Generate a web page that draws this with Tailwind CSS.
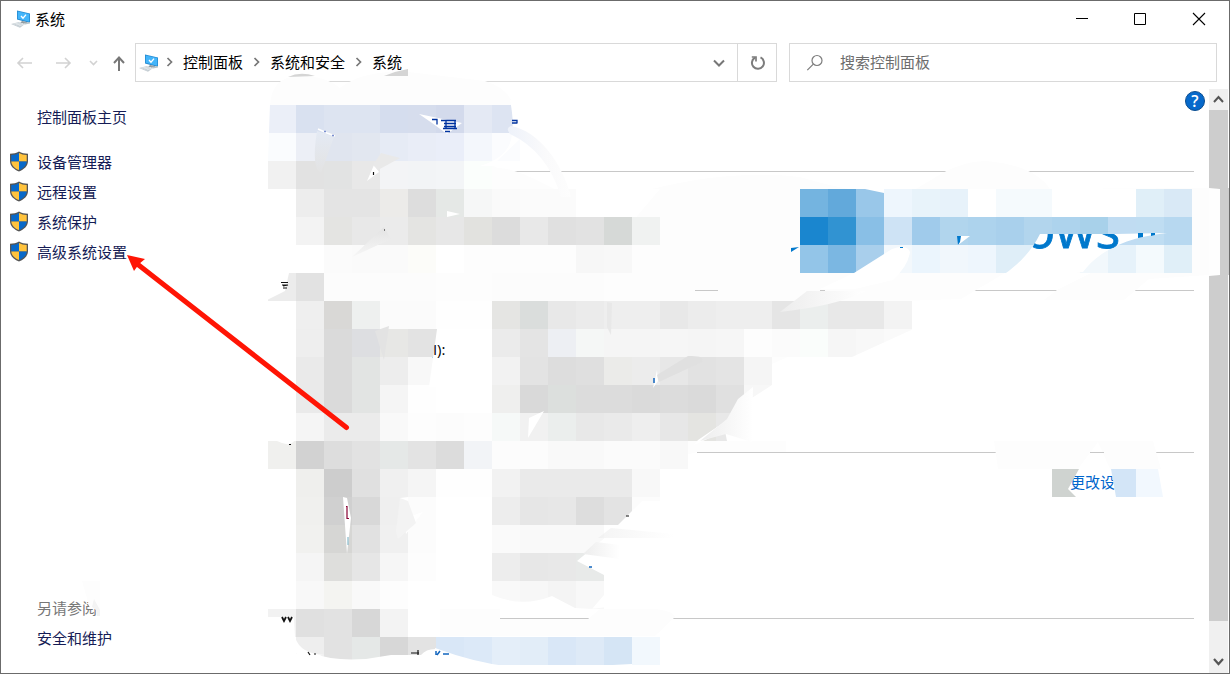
<!DOCTYPE html>
<html lang="zh-CN">
<head>
<meta charset="utf-8">
<title>系统</title>
<script src="https://cdn.jsdelivr.net/npm/@tailwindcss/browser@4"></script>
</head>
<body class="bg-white">
<div class="relative flex h-[674px] w-[1230px] flex-col overflow-hidden border border-[#6b6b6b] bg-white font-['Noto_Sans_CJK_SC',sans-serif] text-[15px] leading-[30px] text-black">
  <svg class="hidden">
    <symbol id="pc" viewBox="0 0 20 18">
      <path d="M6 .5 19 3.500V13L6 9.500Z" fill="#258ad0"/><path d="M6.800 1.500 18.200 4.100V11.800L6.800 8.800Z" fill="#43b5fa"/>
      <path d="m10 6 2 2.200 3-3.600" fill="none" stroke="#fff" stroke-width="1.300"/>
      <path d="m11 11 5 1v1.500l-4 .5-3-1z" fill="#8e999f"/><path d="m12 13 7-1v1.500l-5 1z" fill="#b9c4c9"/>
      <path d="m0 14 8-2 6 2-5 3.800Z" fill="#c3ccd2"/><path d="m2.500 14.200 7-1.500M5 15l7-1.500M7.500 16l6-2" stroke="#eef2f4" stroke-width=".7"/>
    </symbol>
    <symbol id="shield" viewBox="0 0 20 21">
      <path d="M10 .5C7.500 2 4.500 2.700 1 2.700V10c0 5 4 8.500 9 10.500 5-2 9-5.500 9-10.500V2.700C15.500 2.700 12.500 2 10 .5Z" fill="#555"/>
      <path d="M10 2C7.800 3.300 5.500 3.900 2.300 4V10.500H10Z" fill="#0868c8"/><path d="M10 2c2.200 1.300 4.500 1.900 7.700 2V10.500H10Z" fill="#ffc33d"/>
      <path d="M2.300 10.500c.2 4 3.500 7 7.700 8.600V10.500Z" fill="#ffc33d"/><path d="M17.700 10.500c-.2 4-3.500 7-7.700 8.600V10.500Z" fill="#0868c8"/>
    </symbol>
  </svg>
  <header class="flex h-[36px] shrink-0 items-center justify-between pl-[10px]">
    <div class="flex items-center gap-1"><svg class="h-[18px] w-5"><use href="#pc"/></svg><span>系统</span></div>
    <div class="flex gap-[41px] pr-[23px]">
      <svg width="16" height="14" class="mr-1"><path d="M4 6.500h12" stroke="#000"/></svg>
      <svg width="14" height="14"><path d="M1.500 1.500h11v11h-11z" fill="none" stroke="#000"/></svg>
      <svg width="14" height="14" class="ml-1"><path d="m1 1 12 12M13 1 1 13" stroke="#000" stroke-width="1.100"/></svg>
    </div>
  </header>
  <nav class="mt-[6px] flex h-[39px] shrink-0 items-center">
    <svg width="134" height="39" fill="none" stroke="#d2d2d2" stroke-width="1.600">
      <path d="M31 20H17m5-5-5 5 5 5M55 20h14m-5-5 5 5-5 5M89 18l3.500 3.500L96 18"/>
      <path d="M118 28V15m-5 5 5-5.500 5 5.500" stroke="#777" stroke-width="2"/>
    </svg>
    <div class="flex h-[39px] w-[642px] items-center border border-[#d9d9d9] pl-[3px]">
      <svg class="h-[18px] w-5"><use href="#pc"/></svg>
      <svg class="ml-[7px] mr-[9px]" width="8" height="12"><path d="m1.500 1 4 4-4 4" fill="none" stroke="#777" stroke-width="1.700"/></svg>
      <span class="-mt-0.5">控制面板</span>
      <svg class="ml-[10px] mr-[9px]" width="8" height="12"><path d="m1.500 1 4 4-4 4" fill="none" stroke="#777" stroke-width="1.700"/></svg>
      <span class="-mt-0.5">系统和安全</span>
      <svg class="ml-[10px] mr-[9px]" width="8" height="12"><path d="m1.500 1 4 4-4 4" fill="none" stroke="#777" stroke-width="1.700"/></svg>
      <span class="-mt-0.5">系统</span>
      <svg class="ml-auto mr-3" width="12" height="10"><path d="m1 2.500 5 5 5-5" fill="none" stroke="#777" stroke-width="2"/></svg>
      <div class="flex h-full w-[39px] items-center justify-center border-l border-[#d9d9d9]">
        <svg width="16" height="18" fill="none" stroke="#7c7c7c" stroke-width="2"><path d="M11.500 3.400A6 6 0 1 1 6 3.600"/><path d="M2.800 3H7v4.500" stroke-width="1.700"/></svg>
      </div>
    </div>
    <div class="ml-3 flex h-[39px] w-[428px] items-center border border-[#d9d9d9] pl-4 text-[#6d6d6d]">
      <svg width="18" height="18" fill="none" stroke="#7d7d7d" stroke-width="1.200"><circle cx="11" cy="6.500" r="5"/><path d="m7.300 10.200-6 6"/></svg>
      <span class="-mt-0.5 ml-4">搜索控制面板</span>
    </div>
  </nav>
  <main class="mt-[7px] flex min-h-0 flex-1">
    <aside class="flex w-[267px] shrink-0 flex-col pt-[13px] text-[#151c55]">
      <a class="pl-9">控制面板主页</a>
      <div class="mt-[15px] flex flex-col">
        <a class="flex items-center gap-2 pl-2"><svg class="-mt-px" width="20" height="21"><use href="#shield"/></svg>设备管理器</a>
        <a class="flex items-center gap-2 pl-2"><svg class="-mt-px" width="20" height="21"><use href="#shield"/></svg>远程设置</a>
        <a class="flex items-center gap-2 pl-2"><svg class="-mt-px" width="20" height="21"><use href="#shield"/></svg>系统保护</a>
        <a class="flex items-center gap-2 pl-2"><svg class="-mt-px" width="20" height="21"><use href="#shield"/></svg>高级系统设置</a>
      </div>
      <span class="mt-auto pl-9 text-[#777]">另请参阅</span>
      <a class="mb-5 pl-9">安全和维护</a>
    </aside>
    <section class="flex w-[926px] shrink-0 flex-col items-end pt-[82px]">
      <div class="h-[119px] w-[695px] border-t border-[#c8c8c8]"></div>
      <div class="h-[162px] w-[587px] border-t border-[#c8c8c8]"></div>
      <div class="flex h-[166px] w-[497px] justify-end border-t border-[#c8c8c8] pr-[79px] pt-[14px] text-[#0066cc]">更改设</div>
      <div class="w-[695px] border-t border-[#c8c8c8]"></div>
    </section>
    <div class="mx-auto"></div>
    <div class="mr-px flex w-[19px] shrink-0 flex-col bg-[#f0f0f0]">
      <svg width="19" height="21"><path d="m5 13 4.500-5 4.500 5" fill="none" stroke="#555" stroke-width="2"/></svg>
      <div class="h-[511px] bg-[#cdcdcd]"></div>
      <svg width="19" height="52"><path d="m5 38 4.500 5 4.500-5" fill="none" stroke="#555" stroke-width="2.200"/></svg>
    </div>
  </main>

  <svg class="absolute -left-px -top-px" width="1230" height="674">
    <defs>
      <clipPath id="os"><path d="M1040 234h75l52-1c-22 4-45 8-60 22l-80 2z"/></clipPath>
      <clipPath id="colon"><path d="M435 340h15v20h-18z"/></clipPath>
      <linearGradient id="fade" x1="0" x2="1"><stop stop-color="#ededed"/><stop offset="1" stop-color="#fff"/></linearGradient>
      <linearGradient id="fadeDown" x1="0" x2="0" y1="0" y2="1"><stop stop-color="#e4eaf4"/><stop offset="1" stop-color="#e3e3e3"/></linearGradient>
      <linearGradient id="fadeTail" x1="0" x2="1"><stop stop-color="#eef2fa"/><stop offset=".6" stop-color="#fafafb"/><stop offset="1" stop-color="#fdfdfd"/></linearGradient>
      <linearGradient id="fadeLow" x1="0" x2="0" y1="0" y2="1"><stop stop-color="#e3e3e3"/><stop offset="1" stop-color="#f6f6f6"/></linearGradient>
    </defs>
    <g fill="#fdfdfd">
      <path d="M270 105Q272 77 298 76t42 12c18-14 38-15 60-17l85 10q23 7 28 24Z"/>
      <path d="M480 161l18 7c25 1 50 20 78 31v90H464V161ZM652 189q80-20 148-12 60 18 100 17c25-3 43-32 86-33q48 4 64 28l159-1v87l-60 4-25 21h-80l13-10 34-17H1005l-44 26-61 2-80 42-60 26H604V255l56-66Z"/>
      <path d="M520 273h175v32H520ZM718 292l30-19h59l-10 32h-79ZM640 441h146v11h-89l-30 8h-27ZM994 441h159l8 28H998ZM440 609h60v10h88l12-10h55q18 2 20 8l-20 19H440ZM82 581h18v28H90Z"/>
    </g>
    <path d="M697 452.500h90M695 290.500h23" stroke="#c8c8c8"/>
    <g id="mosaic" shape-rendering="crispEdges"></g>
    <path d="M288 77q12-6 27-1ZM384 76q12-5 24-7v7Z" fill="#d5d5d5"/>
    <g fill="#fff">
      <path d="M267 104h3l-2 57h-2ZM510 100h14v35l-32 31h-12q32-10 32-34 2-12-2-32Z"/>
      <path d="m419 114 43 9-15 11-15-11ZM367 181l7-16 5 7ZM447 211l13 3-13 3Z"/>
      <path d="M267 273h22l-4 18-18 9ZM437 329l-8 58h36l20-58ZM267 441h27q-3 5-12 2l-5-2Z"/>
      <path d="m657 370-4 18 5-7ZM529 418l15-7-16 27ZM800 385h-28l-28 18-10 13-17 11-19 13-4 5 31-14 2 10h70Z"/>
      <path d="m343 497 4 1 4 20-4 36ZM400 498l8-1v20l15-5-17 22Z"/>
      <path d="m660 501-18 0-35 35-30 25 27 14v20l-12 14-17-1-23-12q-30 12-60-1v14h98l70-8Z"/>
      <path d="M267 617h27l1 20q5 17 30 18-20 2-31-2h-27ZM435 648q65 24 120 20l77-4v8H290v-18h26q15 7 50 5l25-4h30q5-6 14-6Z"/>
      <path d="M865 189h19v4ZM854 273l38-24q15-5 18 3-2 14-17 28L855 289h-35ZM958 236l12 0-12 9ZM1040 234h75l52-1c-45 5-70 20-84 39h-2l-104 17q45-19 63-55Z"/>
      <path d="M913 329l-4 2-57 26h62Z"/>
      <path d="M1098 442l12 27h-32Z"/>
    </g>
    <path d="m318 129 9 4 8 3" stroke="#fff" stroke-width="1.500" fill="none"/>
    <path d="M1090 452.500h14M500 618.500h87M820 290.500h5" stroke="#c8c8c8"/>
    <path d="M510 134q-5-6 1-8c28 5 52 38 60 71h-10q-14-46-51-63Z" fill="url(#fadeTail)"/>
    <path d="m317 131 17 6-13 36q-10-5-4-42Z" fill="url(#fadeDown)"/><path d="m381 153 19 5-22 12-5-5Z" fill="#e9e9e9"/>
    <path d="m384 227 7 12-39 18Z" fill="url(#fadeLow)"/><path d="m375 331 14-5-5 34Z" fill="#e3e3e3"/>
    <path d="m657 375 31-19q17-1 14 6l-43 20Z" fill="#e0e0e0"/><path d="m607 302 5 1-1 32-4-8Z" fill="#e8e8e8"/>
    <path d="m583 554 13-12 24 3v14Z" fill="url(#fade)"/><path d="m611 528 63 6v4H598Z" fill="url(#fade)" opacity=".6"/>
    <path d="m400 498-4 34 2 7 18-16-8-22Z" fill="#f3f3f3"/><path d="m738 399 15-12-1 55-26-8-26 7 27-22Z" fill="url(#fade)"/>
    <path d="m780 312 27-21 59 0q-30 15-86 21Z" fill="url(#fade)"/>
    <path d="M1052 469h27l-11 20 8 8h-24Z" fill="#cfd3d0"/><path d="M1111 469h25v28h-20Z" fill="#d3e5f7"/><path d="M1136 469h22l5 28h-27Z" fill="#f2f8fe"/>
    <path d="M1209 188l11 1v86l-11 1Z" fill="#fefefe"/><path d="M1220 188h10v87h-10Z" fill="#cdcdcd"/>
    <g clip-path="url(#os)"><text x="1024" y="247.500" font-family="Open Sans" font-size="52" fill="#0078cc" stroke="#0078cc" stroke-width=".8">ows</text></g>
    <path d="M957 236h4l-1 6-2 3ZM791 248l8-1-8 5ZM1138 233h5v4l-5 1ZM1151 233h4v2l-4 1ZM900 247h3v1h-3Z" fill="#0078cc"/>
    <g clip-path="url(#colon)"><text x="428.500" y="355" font-family="Open Sans" font-size="15">(I):</text></g>
    <g fill="none" stroke="#0033a0" stroke-width="1.300"><path d="M432 119.500h5v5M441 120.500h15M444 123.500h12M444 126.500h12M446 120v8M455 120v8M443 128.500h14M445 131.500h5M512 120.500h5v3M512 123h5"/><path d="M324 131.500h2M332 135.500h2" stroke="#7b8fd0"/></g>
    <g fill="none" stroke="#111" stroke-width="1.200"><path d="M281 282.500h7M282 285h6l-5 1M283 288h4M373.500 172v3M384 230h1M289 444.500h2M626 516h3M308 652l2 3M314 654h2M411 653h8M418 650v5"/><path d="M346 506.500h1v12h2" stroke="#803"/><path d="M348 537v8" stroke="#8bc"/></g>
    <path d="m282 617 2 4 2-4M288 617l2 4 2-4" fill="none" stroke="#111" stroke-width="1.800"/>
    <path d="M436 651v4M440 651l-3 4M443 654h6M589 567h3M654 378v5" stroke="#1265be" fill="none" stroke-width="1.500"/>
    <path d="m94 599 6 11v6h-3l-1-6-4-3Z" fill="#f3f3f3"/>
    <path d="M346.500 427.500 136 263" stroke="#ff1505" stroke-width="5" stroke-linecap="round"/><path d="m127 255 18 4-6 5-5 7Z" fill="#ff1505"/>
  </svg>
  <div class="absolute left-[1184px] top-[90px] flex h-5 w-5 items-center justify-center rounded-full border border-[#0b4d8f] bg-[#0669cb] font-['Open_Sans',sans-serif] text-base font-semibold leading-none text-white">?</div>
</div>
<script>
// Mosaic blocks: [top, first column, colours]; each block is 28px, "-" leaves a gap.
const rows = [
[105,0,'ebeff8 d9e1f0 dde4f1 dde4f1 d5ddee d6dded d3daec e4e9f4 dde4f2'],
[133,0,'fafcfe eceff6 e0e5ef e2e7f0 e6ebf5 e9edf7 eaeef9 f4f7fc fbfcfe'],
[161,0,'f1f1f1 e2e2e2 e2e3e3 e8e8e8 f3f4f6 f2f4f6 f3f5f7 fbfefc'],
[189,1,'ededed e4e4e4 e4e4e4 ecebe9 dddddd e5e8e6 f6f7f7 fafafa fbfbfb fbfbfb - - - - - - - - 74b4e0 62a9db 99c7e9 eef6fd e8f3fa e7f2fa ffffff f5fafd f5fafd ffffff ffffff ffffff e0eff8 d9e9f6'],
[217,1,'f3f3f3 e4e4e2 e8e8e8 ebebeb e4e4e2 e7e7e7 e2e2df dcdcdc e8e8e8 e0e0e0 e2e2e2 d6d9d7 f0f2f1 - - - - - 1a86cf 3193d2 89bfe6 cee3f5 a0cbeb b1d5ed add3ed a9d0ec b2d5ed add3ed a8d1ea c0dcf2 bfddf2 b7d8f0'],
[245,2,'fbfbfb fafafa fafafa fcfcf9 - - - - fdfdfd f7f7f7 f8f8f8 - - - - - - 93c5e8 7bb7e2 a9cfec f3f8fc ebf5fd f1f7fc eef6fd dfeef8 dfeef8 - f2f8fc e6f2fa f4fafd e0eff8'],
[273,0,'ececec e2e2e2 fcfcfc fcfcfc fcfcfc fcfcfc fdfdfd fdfdfd fcfcfc fcfcfc fcfcfc fcfcfc'],
[301,1,'efefef d9d8d6 eef0ef fbfbfb fbfbfb fefefe fefefe e5e5e3 dadddc e8e8e8 ebebeb eeeeee eeeeee e8e8e8 ececec eeeeee eeeeee e5e5e5 ebeeed e8e8e8 e8e8e8 f3f3f3'],
[329,1,'eeeeee dadada dddee1 e7e7e5 e3e3e3 e3e3e3 - ebebeb e4e4e4 edeff3 f5f7f6 f5f5f5 f5f5f5 f6f6f6 f5f5f5 f6f6f6 fdfdfd fbfbfb fafdfb f6f6f6 f8f8f8 fafafa'],
[357,1,'eaeaea dadada e2e4e3 ededed f8f8f8 - - f2f2f2 e3e3e3 dddddd dfdfdf ebebe9 ececec e7e7e7 e2e2e2 e4e4e4 f5f5f5'],
[385,1,'eaeaea dadada e2e4e3 f5f5f5 fefefe - - efefee d9d9d9 dcdfdd dcdcdc dcdcdc dadada dcdcdc dadada e0e0e0 f7f7f7'],
[413,1,'f5f5f5 ebebeb ebebeb f9f9f9 fdfdfd fcfcfc fdfdfd f6f9f8 f1f1f1 ebeeed e8e8e8 eaeaea eeeeee e7e7e7 e4e4e1 e8e8e8'],
[441,0,'f0f0ee d2d2d2 dddddd e2e2e2 e5e8e7 e3e3e3 dcdcdc f2f4f7 fcfcfc fcfcfc f9f9f9 f9f9f9 fbfbfb fbfbfb f8f8f8'],
[469,1,'efefed cdcdcd e0e0e0 f0f0f0 f5f5f5 fefefe fefefe f2f2f2 eaeaea eaeaea eaeaea eaeaea f8f8f8'],
[497,1,'f0f0ee d0d0d0 d8d8d8 efefef fcfcfc - - ededed e6e6e6 e7e7e7 dddddd e3e3e3 fcfcfc'],
[525,1,'f1f1ef d6d6d4 e1e1e1 f0f0f0 fcfcfc - - fafafa f9f9f9 f9f9f9 f9f9f9'],
[553,1,'f5f5f5 dededc e6e6e6 f6f6f6 fdfdfd - - ededed e7e7e7 e8e8e8 e8eae9'],
[581,1,'f8f8f8 f4f4f1 f9f9f9 fdfdfd - - - f9f9f9 f7f7f7 f4f4f4 f8f8f8'],
[609,0,'f2f2f2 e0e0e0 e2e2e2 d7d7d7 f3f3f3'],
[637,1,'eeeeee e2e2e2 e5e8e7 d7d7d7 e3e3e3 d9e7f7 dce9f8 e4eef9 e2edf8 d9e7f7 deeaf7 d5e5f5 f2f8fd']];
const g = document.getElementById('mosaic');
for (const [y, start, cells] of rows) cells.split(' ').forEach((c, i) => {
  if (c === '-') return;
  const r = document.createElementNS('http://www.w3.org/2000/svg', 'rect');
  r.setAttribute('x', 268 + (start + i) * 28); r.setAttribute('y', y);
  r.setAttribute('width', 28); r.setAttribute('height', 28); r.setAttribute('fill', '#' + c);
  g.appendChild(r);
});
</script>
</body>
</html>
